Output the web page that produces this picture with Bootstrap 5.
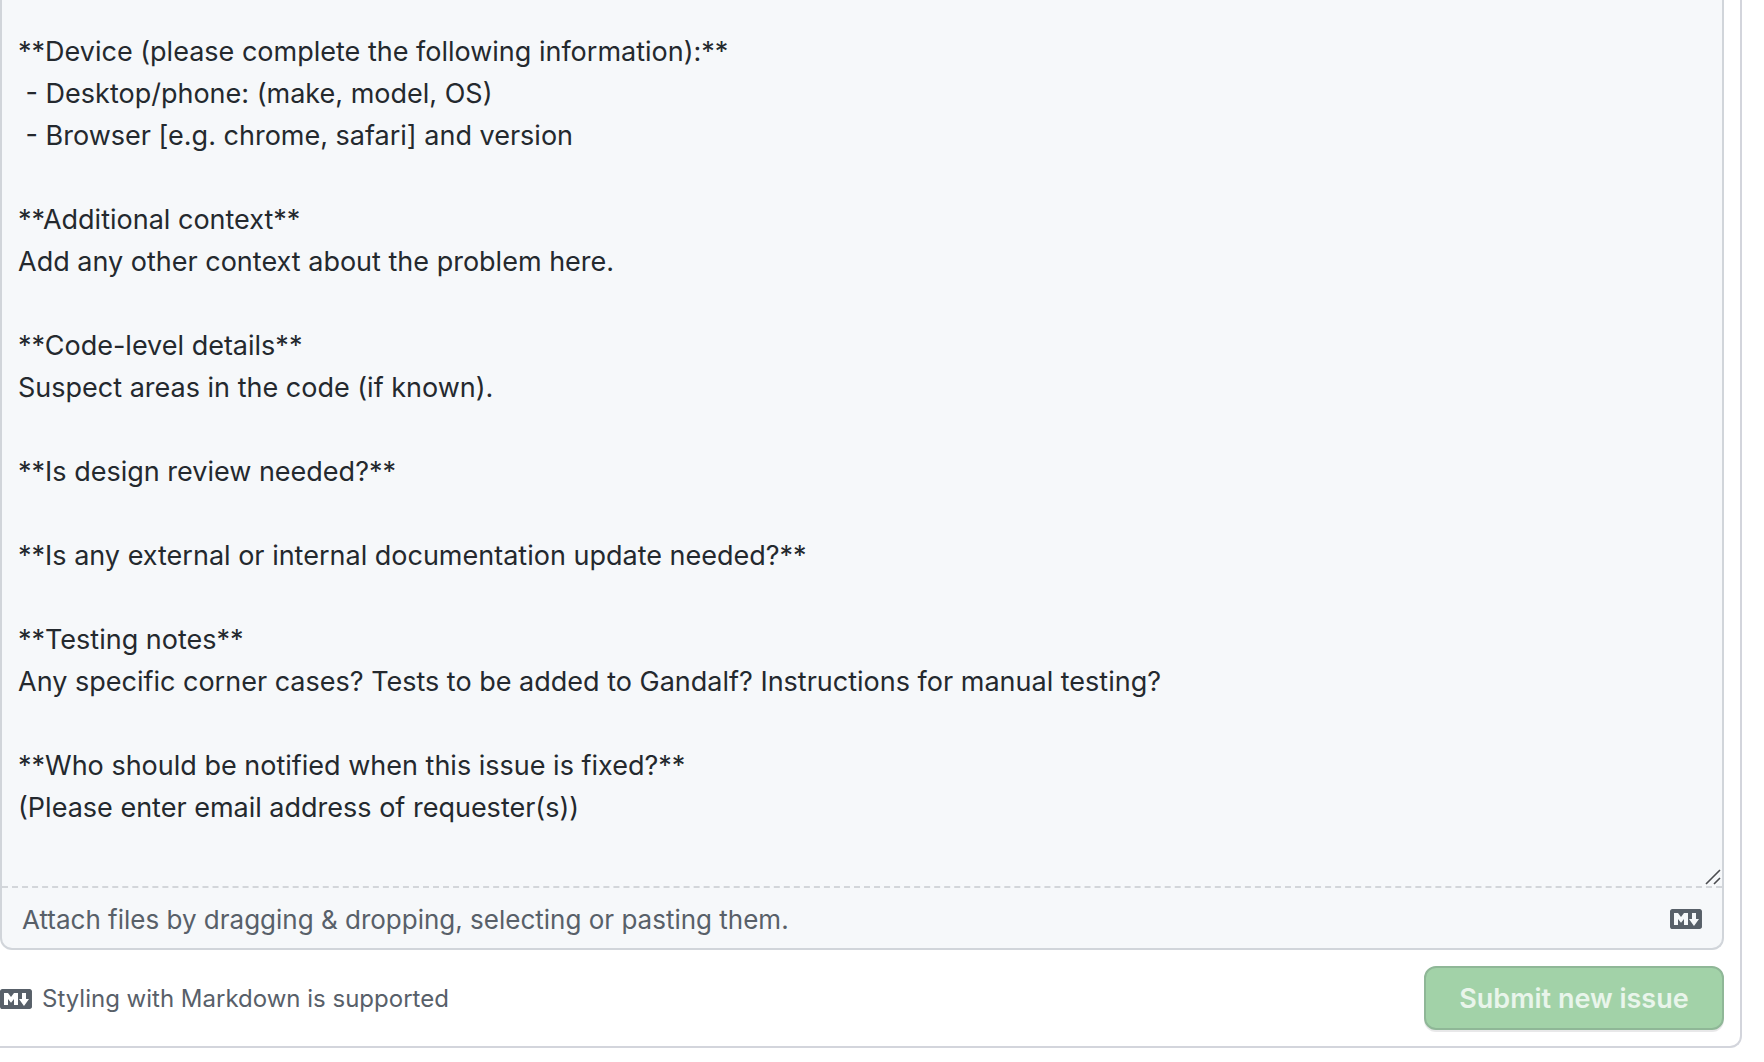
<!DOCTYPE html>
<html lang="en">
<head>
<meta charset="utf-8">
<meta name="viewport" content="width=device-width, initial-scale=1">
<title>New issue</title>
<link href="https://cdn.jsdelivr.net/npm/bootstrap@5.3.0/dist/css/bootstrap.min.css" rel="stylesheet">
<style>
  body { font-family: Inter, "Liberation Sans", sans-serif; color: #24292e; background: #fff; }
  .issue-panel { border: 2px solid #d3d5dc; border-width: 0 2px 2px 0; border-radius: 0 0 12px 0; margin-right: 22px; padding: 0 16px 16px 0; }
  .editor { background: #f6f8fa; border: 2px solid #d1d5da; border-top: 0; border-radius: 0 0 12px 12px; }
  .editor textarea.form-control { font-size: 27px; line-height: 42px; padding: 31px 16px 15px; color: #24292e; background: transparent; resize: none; overflow: hidden; }
  .attach-bar { border-top: 2px dashed #d3d6da; height: 62px; padding: 2px 20px 0; font-size: 26px; color: #586069; }
  .grip { right: 1px; bottom: 1px; }
  .form-foot { margin-top: 16px; }
  .md-link { gap: 10px; padding-top: 2px; font-size: 24px; color: #586069; }
  .md-icon { color: #586069; flex: none; }
  .btn.submit-btn { width: 300px; height: 64px; padding: 2px 0 0; font-size: 27px; font-weight: 600; border: 2px solid #8fb797; border-radius: 12px; background: #a2d2a8; color: #e9f5eb; opacity: 1; box-shadow: 0 2px 0 rgba(27,31,35,.1); }
</style>
<script src="https://cdn.jsdelivr.net/npm/bootstrap@5.3.0/dist/js/bootstrap.bundle.min.js"></script>
</head>
<body>
<svg class="d-none" aria-hidden="true">
  <symbol id="md" viewBox="0 0 16 16"><path fill="currentColor" fill-rule="evenodd" d="M14.85 3H1.15C.52 3 0 3.52 0 4.15v7.69C0 12.48.52 13 1.15 13h13.69c.64 0 1.15-.52 1.15-1.15v-7.7C16 3.52 15.48 3 14.85 3zM9 11H7V8L5.5 9.92 4 8v3H2V5h2l1.5 2L7 5h2v6zm2.99.5L9.5 8H11V5h2v3h1.5l-2.51 3.5z"/></symbol>
</svg>
<form class="issue-panel">
  <div class="editor">
    <div class="position-relative">
      <textarea class="form-control border-0 rounded-0 shadow-none d-block" rows="20" aria-label="Issue description" spellcheck="false">**Device (please complete the following information):**
 - Desktop/phone: (make, model, OS)
 - Browser [e.g. chrome, safari] and version

**Additional context**
Add any other context about the problem here.

**Code-level details**
Suspect areas in the code (if known).

**Is design review needed?**

**Is any external or internal documentation update needed?**

**Testing notes**
Any specific corner cases? Tests to be added to Gandalf? Instructions for manual testing?

**Who should be notified when this issue is fixed?**
(Please enter email address of requester(s))
</textarea>
      <svg class="grip position-absolute" width="16" height="16" viewBox="0 0 16 16" fill="none" stroke="#4b4d50" stroke-width="1.6" aria-hidden="true"><path d="M1 15 15 1M9 15l6-6"/></svg>
    </div>
    <div class="attach-bar d-flex align-items-center justify-content-between">
      <span>Attach files by dragging &amp; dropping, selecting or pasting them.</span>
      <a href="#" class="md-icon d-flex" aria-label="Markdown help"><svg width="32" height="32" aria-hidden="true"><use href="#md"/></svg></a>
    </div>
  </div>
  <div class="form-foot d-flex align-items-center justify-content-between">
    <a href="#" class="md-link d-flex align-items-center text-decoration-none"><svg class="md-icon" width="32" height="32" aria-hidden="true"><use href="#md"/></svg><span>Styling with Markdown is supported</span></a>
    <button type="submit" class="btn submit-btn" disabled>Submit new issue</button>
  </div>
</form>
</body>
</html>
